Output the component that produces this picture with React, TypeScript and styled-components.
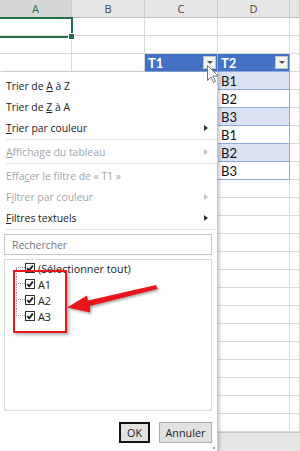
import React from 'react';
import styled, { createGlobalStyle } from 'styled-components';

const GlobalStyle = createGlobalStyle`
  html, body { margin: 0; padding: 0; background: #fff; }
  body { font-family: "Open Sans", "Noto Sans", sans-serif; }
`;

const COLS = '72px 73px 73px 72px 1fr';
const UI_FONT = '"Open Sans", "Noto Sans", sans-serif';
const CELL_FONT = 'Lato, "Open Sans", sans-serif';

const Screen = styled.div`
  position: relative;
  width: 300px;
  height: 451px;
  overflow: hidden;
  background: #fff;
  display: flex;
  flex-direction: column;
`;

const HeaderRow = styled.div`
  display: grid;
  grid-template-columns: ${COLS};
  height: 18px;
  flex: none;
`;

const ColHeader = styled.div<{ $active?: boolean }>`
  box-sizing: border-box;
  display: flex;
  align-items: center;
  justify-content: center;
  background: ${p => (p.$active ? '#d6d6d6' : '#e6e6e6')};
  color: ${p => (p.$active ? '#217346' : '#444')};
  border-right: 1px solid #c9c9c9;
  border-bottom: 1px solid ${p => (p.$active ? '#217346' : '#bdbdbd')};
  font: 11px ${UI_FONT};
`;

const Row = styled.div`
  display: grid;
  grid-template-columns: ${COLS};
  height: 18px;
  flex: none;
`;

type CellKind = 'grid' | 'head' | 'band' | 'plain';

const Cell = styled.div<{ $kind: CellKind }>`
  box-sizing: border-box;
  display: flex;
  align-items: center;
  justify-content: space-between;
  padding: 0 1px 0 3px;
  font: ${p => (p.$kind === 'head' ? 'bold ' : '')}13px ${CELL_FONT};
  color: ${p => (p.$kind === 'head' ? '#fff' : '#111')};
  background: ${p => (p.$kind === 'head' ? '#4472c4' : p.$kind === 'band' ? '#d9e1f2' : '#fff')};
  border-right: 1px solid ${p => (p.$kind === 'grid' ? '#dadada' : '#8ea9db')};
  border-bottom: 1px solid ${p => (p.$kind === 'grid' ? '#dadada' : '#8ea9db')};
`;

const FilterButton = styled.span`
  box-sizing: border-box;
  width: 13px;
  height: 13px;
  background: #f3f3f3;
  border: 1px solid #c4c4c4;
  display: flex;
  align-items: center;
  justify-content: center;
  &::after {
    content: '';
    border-left: 3px solid transparent;
    border-right: 3px solid transparent;
    border-top: 3px solid #555;
  }
`;

const BottomBar = styled.div`
  flex: 1;
  background: #e6e6e6;
  border-top: 1px solid #c6c6c6;
`;

const ActiveCell = styled.div`
  position: absolute;
  left: -3px;
  top: 17px;
  width: 76px;
  height: 21px;
  box-sizing: border-box;
  border: 2px solid #217346;
  &::after {
    content: '';
    position: absolute;
    right: -4px;
    bottom: -4px;
    width: 5px;
    height: 5px;
    background: #217346;
    border: 1px solid #fff;
  }
`;

/* ---------- filter menu ---------- */

const Menu = styled.div`
  position: absolute;
  left: 0;
  top: 72px;
  width: 218px;
  bottom: 0;
  box-sizing: border-box;
  background: #fff;
  border-right: 1px solid #c6c6c6;
  box-shadow: 2px 0 3px rgba(0, 0, 0, 0.18);
  display: flex;
  flex-direction: column;
  padding-top: 3px;
  font-family: ${UI_FONT};
`;

const MenuItem = styled.div<{ $disabled?: boolean }>`
  height: 21px;
  flex: none;
  display: flex;
  align-items: center;
  justify-content: space-between;
  padding: 0 9px 0 6px;
  font-size: 10.4px;
  color: ${p => (p.$disabled ? '#a6a6a6' : '#222')};
  u { text-decoration-thickness: 1px; text-underline-offset: 1px; }
`;

const SubArrow = styled.span<{ $disabled?: boolean }>`
  border-top: 3.5px solid transparent;
  border-bottom: 3.5px solid transparent;
  border-left: 4px solid ${p => (p.$disabled ? '#c4c4c4' : '#333')};
`;

const Separator = styled.div`
  height: 1px;
  flex: none;
  margin: 1px 0 1px 6px;
  background: #e2e2e2;
`;

const Search = styled.input`
  box-sizing: border-box;
  flex: none;
  margin: 3px 5px 0 4px;
  height: 21px;
  border: 1px solid #c6c6c6;
  padding: 0 7px;
  font: 10.4px ${UI_FONT};
  color: #222;
  outline: none;
  &::placeholder { color: #777; }
`;

const ListBox = styled.div`
  box-sizing: border-box;
  flex: none;
  margin: 4px 5px 0 4px;
  height: 152px;
  border: 1px solid #dcdcdc;
  padding: 0 0 0 11px;
`;

const ListItem = styled.div`
  height: 16px;
  display: flex;
  align-items: center;
  font-size: 10.8px;
  color: #222;
`;

const Lead = styled.span`
  width: 9px;
  height: 16px;
  display: flex;
  flex-direction: column;
  flex: none;
`;

const LeadHalf = styled.span<{ $left?: boolean; $bottom?: boolean }>`
  flex: 1;
  border-left: 1px dotted ${p => (p.$left ? '#9a9a9a' : 'transparent')};
  border-bottom: 1px dotted ${p => (p.$bottom ? '#9a9a9a' : 'transparent')};
`;

const CheckLabel = styled.span`
  margin-left: 3px;
`;

const Buttons = styled.div`
  display: flex;
  justify-content: flex-end;
  gap: 9px;
  margin-top: 11px;
  padding-right: 5px;
`;

const DialogButton = styled.button<{ $focused?: boolean }>`
  box-sizing: border-box;
  height: 21px;
  width: ${p => (p.$focused ? '31px' : '53px')};
  padding: 0;
  background: #e1e1e1;
  border: ${p => (p.$focused ? '2px solid #111' : '1px solid #adadad')};
  font: 10.8px ${UI_FONT};
  color: #222;
`;

const Grip = styled.span`
  position: absolute;
  right: 2px;
  bottom: 2px;
  width: 2px;
  height: 2px;
  background: #a0a0a0;
`;

/* ---------- annotations ---------- */

const Highlight = styled.div`
  position: absolute;
  left: 13px;
  top: 270px;
  width: 54px;
  height: 63px;
  box-sizing: border-box;
  border: 2px solid #e8171d;
  box-shadow: 2px 2px 3px rgba(0, 0, 0, 0.3);
`;

const Overlay = styled.svg`
  position: absolute;
  overflow: visible;
`;

const CheckBox = () => (
  <svg width="10" height="10" viewBox="0 0 10 10" style={{ flex: 'none' }}>
    <rect x="0.5" y="0.5" width="9" height="9" fill="#fff" stroke="#333" />
    <path d="M2.2 5.2 L4.2 7.3 L7.9 2.6" fill="none" stroke="#111" strokeWidth="1.7" />
  </svg>
);

const TreeRow = ({ label, root, last }: { label: string; root?: boolean; last?: boolean }) => (
  <ListItem>
    <Lead>
      <LeadHalf $left={!root} $bottom />
      <LeadHalf $left={root || !last} />
    </Lead>
    <CheckBox />
    <CheckLabel>{label}</CheckLabel>
  </ListItem>
);

const tableRows = ['B1', 'B2', 'B3', 'B1', 'B2', 'B3'];

export default function App() {
  const rows: React.ReactNode[] = [];
  for (let r = 1; r <= 23; r++) {
    let c: React.ReactNode = <Cell $kind="grid" />;
    let d: React.ReactNode = <Cell $kind="grid" />;
    if (r === 3) {
      c = (
        <Cell $kind="head">
          T1<FilterButton />
        </Cell>
      );
      d = (
        <Cell $kind="head">
          T2<FilterButton />
        </Cell>
      );
    } else if (r >= 4 && r <= 9) {
      const i = r - 4;
      const kind: CellKind = i % 2 === 0 ? 'band' : 'plain';
      c = <Cell $kind={kind} />;
      d = <Cell $kind={kind}>{tableRows[i]}</Cell>;
    }
    rows.push(
      <Row key={r}>
        <Cell $kind="grid" />
        <Cell $kind="grid" />
        {c}
        {d}
        <Cell $kind="grid" />
      </Row>
    );
  }

  return (
    <Screen>
      <GlobalStyle />
      <HeaderRow>
        <ColHeader $active>A</ColHeader>
        <ColHeader>B</ColHeader>
        <ColHeader>C</ColHeader>
        <ColHeader>D</ColHeader>
        <ColHeader />
      </HeaderRow>
      {rows}
      <BottomBar />
      <ActiveCell />

      <Menu>
        <MenuItem>
          <span>Trier de <u>A</u> à Z</span>
        </MenuItem>
        <MenuItem>
          <span>Trier de <u>Z</u> à A</span>
        </MenuItem>
        <MenuItem>
          <span><u>T</u>rier par couleur</span>
          <SubArrow />
        </MenuItem>
        <Separator />
        <MenuItem $disabled>
          <span><u>A</u>ffichage du tableau</span>
          <SubArrow $disabled />
        </MenuItem>
        <Separator />
        <MenuItem $disabled>
          <span>Effa<u>c</u>er le filtre de « T1 »</span>
        </MenuItem>
        <MenuItem $disabled>
          <span>F<u>i</u>ltrer par couleur</span>
          <SubArrow $disabled />
        </MenuItem>
        <MenuItem>
          <span><u>F</u>iltres textuels</span>
          <SubArrow />
        </MenuItem>
        <Separator />
        <Search placeholder="Rechercher" />
        <ListBox>
          <TreeRow label="(Sélectionner tout)" root />
          <TreeRow label="A1" />
          <TreeRow label="A2" />
          <TreeRow label="A3" last />
        </ListBox>
        <Buttons>
          <DialogButton $focused>OK</DialogButton>
          <DialogButton>Annuler</DialogButton>
        </Buttons>
        <Grip />
      </Menu>

      <Highlight />
      <Overlay style={{ left: 0, top: 0 }} width="300" height="451" viewBox="0 0 300 451">
        <defs>
          <filter id="arrowShadow" x="-20%" y="-50%" width="140%" height="200%">
            <feDropShadow dx="1.5" dy="1.5" stdDeviation="1.2" floodColor="#000" floodOpacity="0.35" />
          </filter>
        </defs>
        <polygon
          points="156,285 157.5,289 90,306 90,312.5 67,307.5 87,295.5 88,300.5"
          fill="#e8171d"
          filter="url(#arrowShadow)"
        />
        <path
          d="M207.5 65.5 L207.5 80.5 L211 77 L213.5 82.5 L215.5 81.5 L213 76 L218 76 Z"
          fill="#fff"
          stroke="#777"
          strokeWidth="1"
          strokeLinejoin="round"
        />
      </Overlay>
    </Screen>
  );
}
